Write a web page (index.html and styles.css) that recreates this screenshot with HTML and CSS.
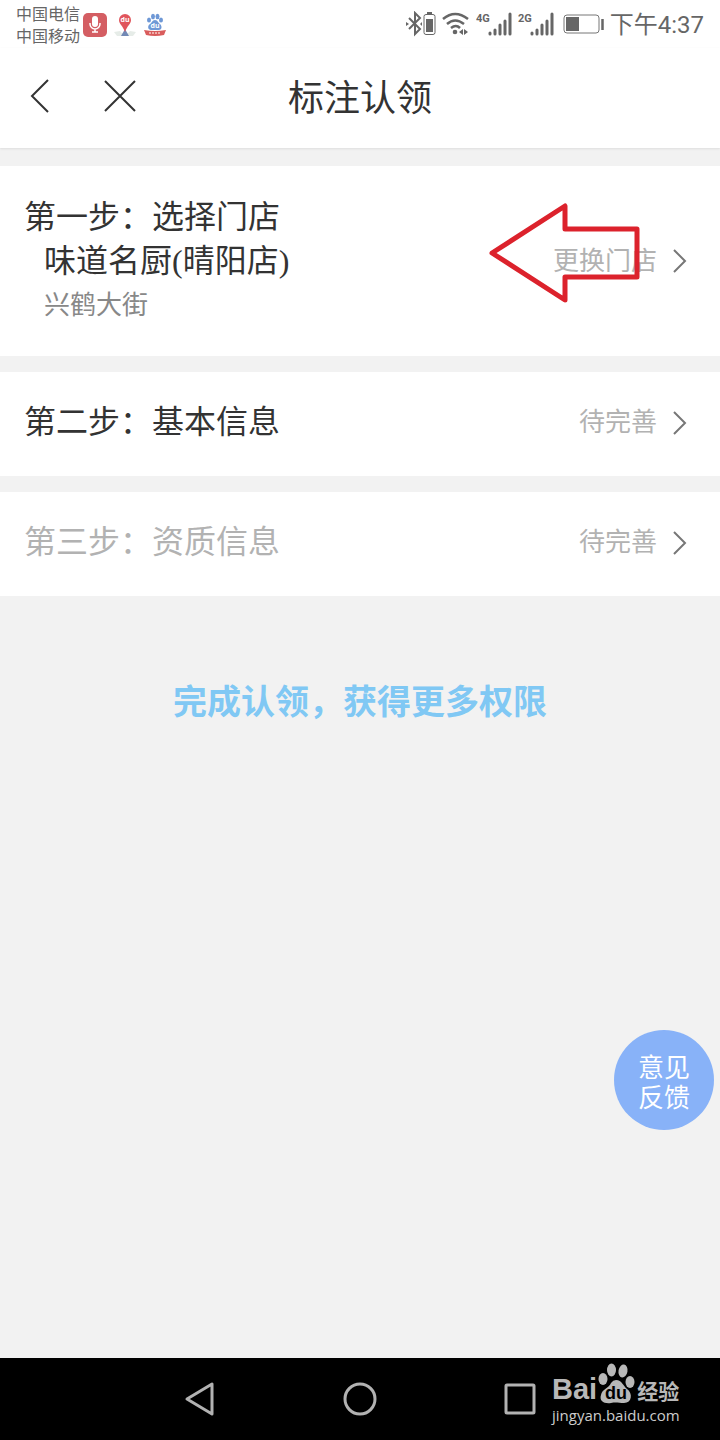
FILE: index.html
```html
<!DOCTYPE html>
<html lang="zh-CN">
<head>
<meta charset="utf-8">
<meta name="viewport" content="width=device-width, initial-scale=1">
<title>标注认领</title>
<link rel="stylesheet" href="styles.css">
</head>
<body>
<div class="status-bar">
  <div class="carriers"><span>中国电信</span><span>中国移动</span></div>
  <div class="notices">
    <svg width="24" height="26" viewBox="0 0 24 26"><rect y="1" width="24" height="24" rx="5" fill="#d45e63"/><rect x="9" y="4" width="6" height="11" rx="3" fill="#fff"/><path d="M7 11v1a5 5 0 0 0 10 0v-1M12 17v3M9 20h6" fill="none" stroke="#fff" stroke-width="1.5"/></svg>
    <svg width="24" height="26" viewBox="0 0 24 26"><path d="M1 20l6-1 5 5 5-5 6 1-3 4H4z" fill="#e6ece8"/><path d="M12 17l4 7H8z" fill="#7289b5"/><path d="M12 20C10 14 6 12 6 8a6 6 0 0 1 12 0c0 4-4 6-6 12z" fill="#e0555c"/><text x="12" y="10" class="pin-text">du</text></svg>
    <svg width="24" height="26" viewBox="0 0 24 26"><g fill="#6e98d6"><ellipse cx="6" cy="8" rx="2" ry="2.6"/><ellipse cx="10" cy="4.5" rx="2" ry="2.7"/><ellipse cx="14.500" cy="4.500" rx="2" ry="2.700"/><ellipse cx="18" cy="8" rx="2" ry="2.600"/><path d="M12 8c3 0 3 3 5 4 3 3 1 6-1 6H8c-3 0-4-4-1-6 2-1 2-4 5-4z"/></g><text x="12" y="16" class="pin-text">du</text><path d="M1 18q11 2 22 0l-2 5q-9 2-18 0z" fill="#d95c5c"/><path d="M6 21h12" stroke="#f4c9c4" stroke-width="1.500" stroke-dasharray="2 1"/></svg>
  </div>
  <div class="indicators">
    <svg width="30" height="26" viewBox="0 0 30 26"><path d="M3 7l11 11-5 5V2l5 5L3 18" fill="none" stroke="#666" stroke-width="2"/><path d="M0 11l3 2-3 2zM16 11l-2 2 2 2z" fill="#666"/><rect x="18" y="3.500" width="11" height="20" rx="2" fill="none" stroke="#666"/><path d="M21 1h5v2h-5zM20 8h7v13h-7z" fill="#666"/></svg>
    <svg width="28" height="26" viewBox="0 0 28 26"><g fill="none" stroke="#666" stroke-width="2.500"><path d="M1 8q12-10 25 0M5 13q8-7 17 0M9 17q5-4 9 0"/></g><circle cx="13" cy="21" r="2.300" fill="#666"/><path d="M21 18v6l-4-3zM22 18v6l4-3z" fill="#666"/></svg>
    <svg width="36" height="26" viewBox="0 0 36 26"><text x="0" y="11" class="network">4G</text><path d="M14 23v-1M19 23v-4M24 23v-9M29 23v-13M34 23V3" class="bars"/></svg>
    <svg width="36" height="26" viewBox="0 0 36 26"><text x="0" y="11" class="network">2G</text><path d="M14 23v-1M19 23v-4M24 23v-9M29 23v-13M34 23V3" class="bars"/></svg>
    <svg class="battery" width="41" height="26" viewBox="0 0 41 26"><rect x="1" y="4" width="35" height="18" rx="3" fill="none" stroke="#777"/><path d="M3 6h13v14H3z" fill="#666"/><path d="M39.500 8v11" stroke="#666" stroke-width="2.500"/></svg>
    <time>下午4:37</time>
  </div>
</div>
<header class="title-bar">
  <div class="title-actions">
    <button type="button" aria-label="返回"><svg width="40" height="40" viewBox="0 0 40 40"><path d="M28 4L12 20l16 16"/></svg></button>
    <button type="button" aria-label="关闭"><svg width="40" height="40" viewBox="0 0 40 40"><path d="M5 5l30 30M35 5L5 35"/></svg></button>
  </div>
  <h1>标注认领</h1>
</header>
<main>
  <section class="step">
    <div class="step-body">
      <h2>第一步：选择门店</h2>
      <p class="store">味道名厨(晴阳店)</p>
      <p class="address">兴鹤大街</p>
    </div>
    <button type="button" class="step-action">更换门店<svg width="14" height="24" viewBox="0 0 14 24"><path d="M1 1l11 11L1 23"/></svg></button>
    <svg class="pointer" width="152" height="100" viewBox="0 0 152 100"><path d="M4 50L77 3v23h72v48H77v23z"/></svg>
  </section>
  <section class="step compact">
    <h2>第二步：基本信息</h2>
    <button type="button" class="step-action">待完善<svg width="14" height="24" viewBox="0 0 14 24"><path d="M1 1l11 11L1 23"/></svg></button>
  </section>
  <section class="step compact pending">
    <h2>第三步：资质信息</h2>
    <button type="button" class="step-action">待完善<svg width="14" height="24" viewBox="0 0 14 24"><path d="M1 1l11 11L1 23"/></svg></button>
  </section>
  <p class="promo">完成认领，获得更多权限</p>
</main>
<button type="button" class="feedback">意见<br>反馈</button>
<nav class="nav-bar">
  <button type="button" aria-label="返回"><svg width="40" height="40" viewBox="0 0 40 40"><path d="M32 5v30L7 20z"/></svg></button>
  <button type="button" aria-label="主页"><svg width="40" height="40" viewBox="0 0 40 40"><circle cx="20" cy="20" r="15"/></svg></button>
  <button type="button" aria-label="最近任务"><svg width="40" height="40" viewBox="0 0 40 40"><rect x="6" y="6" width="28" height="28" rx="1"/></svg></button>
  <div class="watermark">
    <div class="brand"><span>Bai</span><svg width="38" height="42" viewBox="0 0 38 42"><g fill="#b8b8b8"><ellipse cx="6" cy="17" rx="4.500" ry="6"/><ellipse cx="14.500" cy="8" rx="4.500" ry="6.500"/><ellipse cx="26" cy="9" rx="4.500" ry="6.500" transform="rotate(10 26 9)"/><ellipse cx="33" cy="20" rx="4.500" ry="6"/><path d="M19 18c6 0 7 6 11 9 6 4 5 14-3 14-5 0-8-1-13 0-7 1-12-2-10-8 1-6 8-7 10-12q2-3 5-3z"/></g><text x="19" y="37" class="paw-text">du</text></svg><span class="brand-cn">经验</span></div>
    <div class="domain">jingyan.baidu.com</div>
  </div>
</nav>
</body>
</html>
```
FILE: styles.css
```css
* { box-sizing: border-box; }
body {
  margin: 0;
  min-height: 100vh;
  display: flex;
  flex-direction: column;
  background: #f2f2f2;
  color: #333;
  font-family: Roboto, "Noto Sans CJK SC", sans-serif;
}
h1, h2, p { margin: 0; font-weight: 400; }
button { border: 0; padding: 0; background: none; font: inherit; color: inherit; }
svg { display: block; flex: none; }

.status-bar {
  display: flex;
  align-items: center;
  height: 48px;
  padding: 0 16px;
  background: #fff;
  color: #666;
}
.carriers { display: flex; flex-direction: column; font-size: 16px; line-height: 22px; padding-top: 3px; }
.notices { display: flex; gap: 6px; margin-left: 3px; padding-top: 2px; }
.pin-text { font: bold 7px "Open Sans", sans-serif; fill: #fff; text-anchor: middle; }
.indicators { display: flex; align-items: center; gap: 6px; margin-left: auto; }
.network { font: bold 11px Roboto, sans-serif; fill: #666; }
.bars { fill: none; stroke: #666; stroke-width: 3; stroke-linecap: round; }
.battery { margin-left: 3px; }
.indicators time { padding-top: 2px; font-size: 24px; line-height: 32px; }

.title-bar {
  display: grid;
  grid-template-columns: 1fr auto 1fr;
  align-items: center;
  height: 100px;
  padding: 0 20px 4px;
  background: #fff;
  box-shadow: 0 1px 2px #ddd;
}
.title-actions { display: flex; gap: 40px; }
.title-bar svg { fill: none; stroke: #333; stroke-width: 2; }
.title-bar h1 { padding-top: 6px; font-size: 36px; line-height: 48px; }

main { flex: 1; padding-top: 18px; }
.step {
  position: relative;
  display: flex;
  align-items: center;
  justify-content: space-between;
  margin-bottom: 16px;
  padding: 29px 33px 29px 24px;
  background: #fff;
}
.step h2, .store { font-size: 32px; line-height: 44px; }
.store { padding-left: 20px; font-family: "Liberation Serif", "Noto Sans CJK SC", serif; }
.address { padding-left: 20px; font-size: 26px; line-height: 44px; color: #888; }
.step-action { display: flex; align-items: center; gap: 16px; font-size: 26px; line-height: 36px; color: #b2b2b2; }
.step-action svg { fill: none; stroke: #777; stroke-width: 2; }
.compact { padding-top: 28px; padding-bottom: 32px; }
.compact .step-action { align-items: flex-end; line-height: 26px; }
.pending h2 { color: #b2b2b2; }
.pointer { position: absolute; top: 37px; right: 80px; }
.pointer path { fill: none; stroke: #dc222c; stroke-width: 5; stroke-linejoin: round; }
.promo { padding-top: 62px; text-align: center; font-size: 34px; line-height: 56px; font-weight: 700; color: #80c8f4; }

.feedback {
  position: fixed;
  right: 6px;
  bottom: 310px;
  width: 100px;
  height: 100px;
  padding-top: 6px;
  border-radius: 50%;
  background: #88b2f8;
  color: #fff;
  font-size: 26px;
  line-height: 30px;
}

.nav-bar {
  position: relative;
  display: flex;
  justify-content: center;
  align-items: center;
  gap: 120px;
  height: 82px;
  background: #000;
}
.nav-bar > button svg { fill: none; stroke: #b2b2b2; stroke-width: 3; stroke-linejoin: round; }
.watermark { position: absolute; right: 38px; top: 4px; width: 130px; color: #b8b8b8; }
.brand { display: flex; align-items: flex-end; font: bold 29px/30px "Liberation Sans", sans-serif; }
.brand-cn { margin-left: 2px; font: bold 21px/28px "Noto Sans CJK SC", sans-serif; }
.paw-text { font: bold 18px "Liberation Sans", sans-serif; fill: #000; text-anchor: middle; }
.domain { padding-top: 2px; font: 15px/18px "Open Sans", sans-serif; color: #ccc; }
```
